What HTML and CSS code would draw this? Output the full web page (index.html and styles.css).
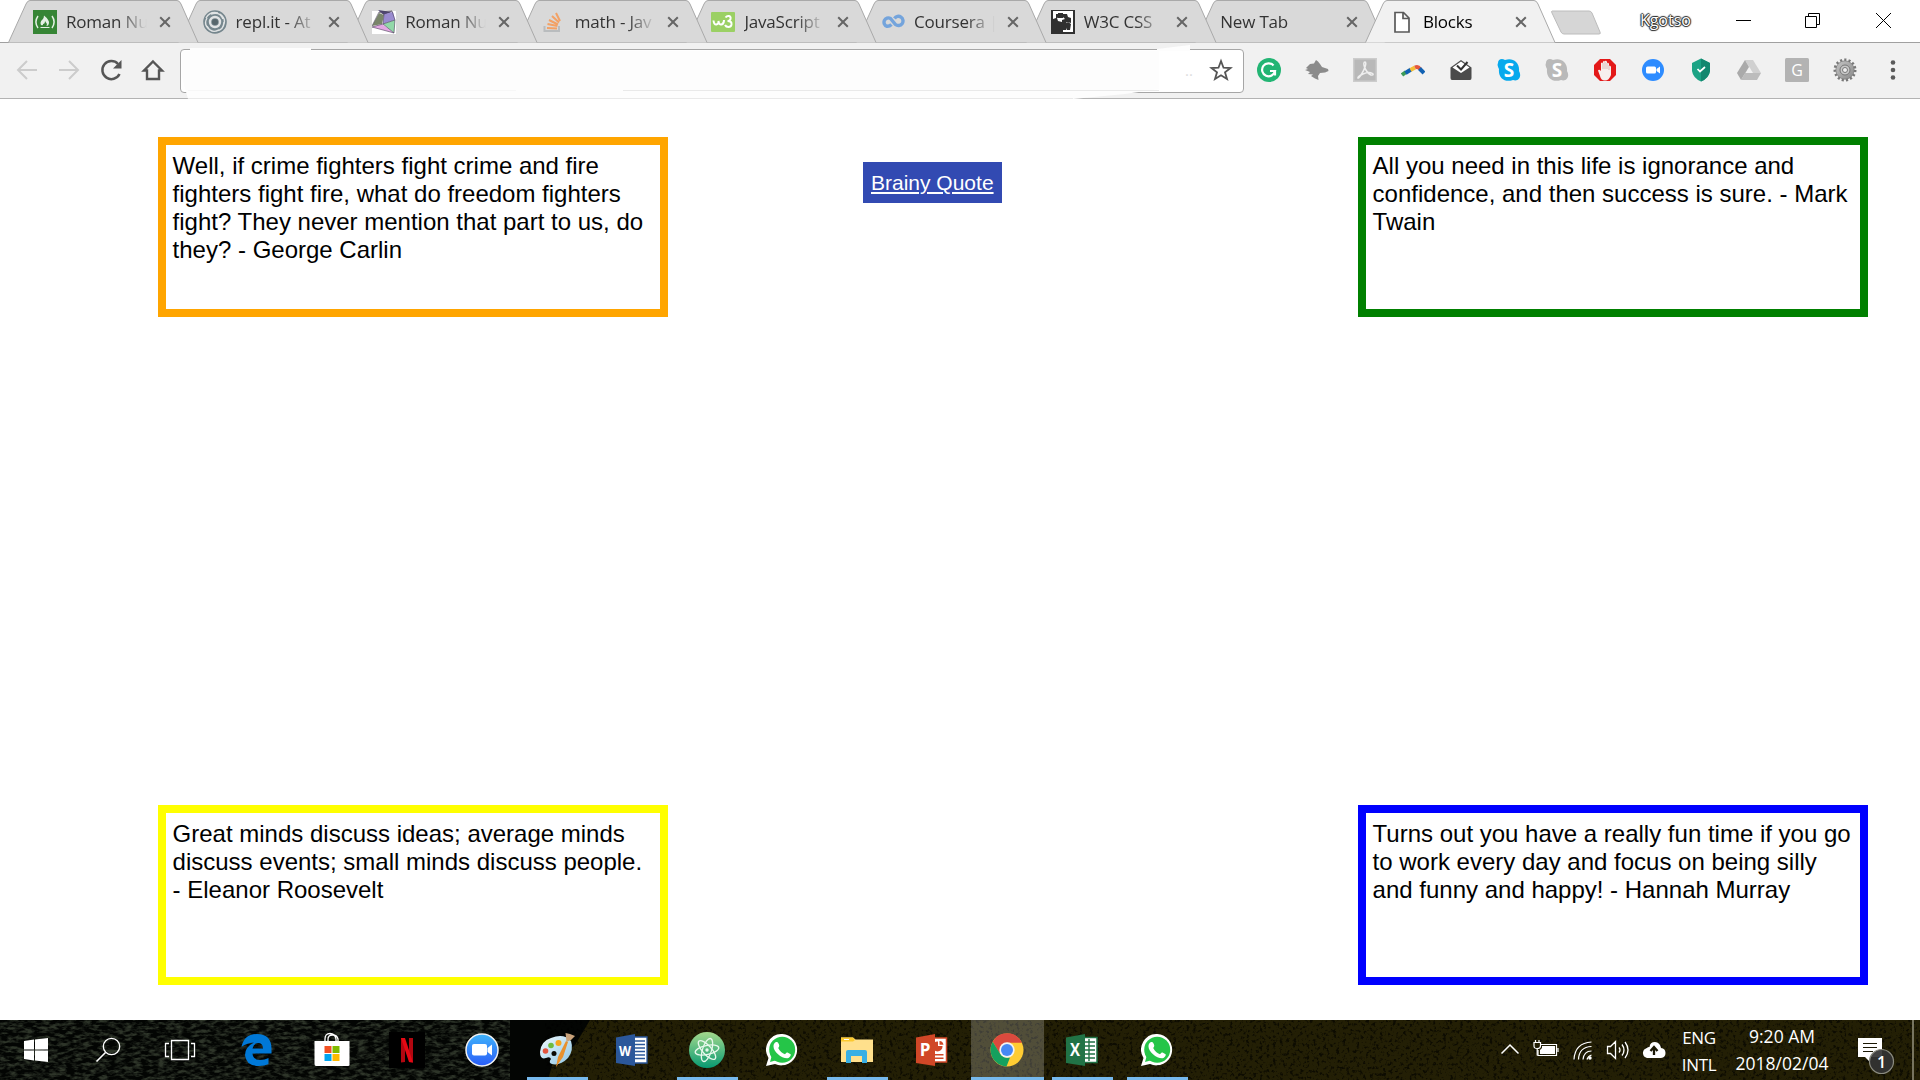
FILE: index.html
```
<!DOCTYPE html>
<html lang="en">
<head>
<meta charset="utf-8">
<title>Blocks</title>
<link rel="stylesheet" href="styles.css">
</head>
<body>
<svg class="defs" aria-hidden="true">
  <defs>
    <linearGradient id="atomg" x1="0" y1="0" x2="0" y2="1"><stop offset="0" stop-color="#a3d88c"/><stop offset="1" stop-color="#089a72"/></linearGradient>
    <linearGradient id="zoomg" x1="0" y1="0" x2="0" y2="1"><stop offset="0" stop-color="#3fb4fb"/><stop offset="1" stop-color="#2a5cf8"/></linearGradient>
    <linearGradient id="gearg" x1="0" y1="0" x2="1" y2="1"><stop offset="0" stop-color="#c5c5c5"/><stop offset="1" stop-color="#8a8a8a"/></linearGradient>
    <linearGradient id="palg" x1="0" y1="0" x2="1" y2="1"><stop offset="0" stop-color="#f0faff"/><stop offset="1" stop-color="#8fc6e4"/></linearGradient>
    <filter id="grain" x="0" y="0" width="100%" height="100%"><feTurbulence type="fractalNoise" baseFrequency=".3" numOctaves="3" seed="4"/><feColorMatrix values="0 0 0 0 0  0 0 0 0 0  0 0 0 0 0  5 0 0 0 -2.6"/></filter>
    <filter id="streaks" x="0" y="0" width="100%" height="100%"><feTurbulence type="fractalNoise" baseFrequency=".12 .3" numOctaves="3" seed="9"/><feColorMatrix values="0 0 0 0 .1  0 0 0 0 .13  0 0 0 0 .08  3 0 0 0 -1.2"/></filter>
    <symbol id="tabshape" viewBox="0 0 191 43"><path d="M.5 42.5 18 4Q19.500.5 22 .5H169Q171.500.5 173 4L190 42.500"/></symbol>
    <symbol id="x" viewBox="0 0 12 12"><path d="M1.200 1.200 10.800 10.800M10.800 1.200 1.200 10.800" fill="none" stroke="#666" stroke-width="2"/></symbol>
    <symbol id="whatsapp" viewBox="0 0 32 32"><path d="M16.300 0A15.700 15.700 0 1 1 9 30L0 32 2.500 24A15.700 15.700 0 0 1 16.300 0Z" fill="#fff"/><circle cx="16.200" cy="15.800" r="13" fill="#25c548"/><path d="M4 28 6 21 11 26Z" fill="#25c548"/><path d="M9.500 8.200C11.500 7.500 12 8 12.800 10S13.400 12.300 12.200 14C14 17.500 16 19.300 19 20.200 20.500 18.400 21 18.200 22 18.800L24.600 20.200C25.400 21 23.500 24 21.500 24.200 15.500 24.500 7.500 17.500 7.500 12.400 7.500 10.400 8.200 9 9.500 8.200Z" fill="#fff"/></symbol>
    <symbol id="skype" viewBox="0 0 24 24"><path d="M1 5C1 1 5 0 8 2 15-1 23 4 22 13 25 18 22 24 16 22 8 25 1 20 2 11 1 9 0 7 1 5Z"/><text x="12" y="18.500" text-anchor="middle" font-size="19" font-weight="700" fill="#fff">S</text></symbol>
  </defs>
</svg>

<header class="browser">
  <div class="tabstrip">
    <div class="tab t1"><svg class="shape"><use href="#tabshape"/></svg>
      <svg class="fav" viewBox="0 0 24 24"><path fill="#368535" d="M0 0H24V24H0Z"/><path d="M5 6Q.8 12 5 18M19 6Q23.200 12 19 18" fill="none" stroke="#e4f0e4" stroke-width="1.500"/><path d="M11 5.500Q16.500 10 16 13 15.500 16 13.500 16 14.500 13.500 12 11 12 14 10 14 10.500 16 8 15 6.500 12 9.500 9.500 11 8 11 5.500ZM7.500 17H16.500V18H7.500Z" fill="#e4f0e4"/></svg>
      <span class="title">Roman Nu</span><svg class="close"><use href="#x"/></svg></div>
    <div class="tab t2"><svg class="shape"><use href="#tabshape"/></svg>
      <svg class="fav" viewBox="0 0 24 24"><circle cx="12" cy="12" r="11.800" fill="#75868d"/><circle cx="12" cy="12" r="5" fill="none" stroke="#e1e3e4" stroke-width="2.400"/><circle cx="12" cy="12" r="3" fill="#57666c"/><path d="M3 8Q7 1 15 3M8 4Q17 1 20 9M17 4Q24 9 20 16M21 12Q21 20 13 21M16 20Q8 24 4 16M7 20Q0 15 4 8" fill="none" stroke="#e0e3e4" stroke-width="1.400"/></svg>
      <span class="title">repl.it - At</span><svg class="close"><use href="#x"/></svg></div>
    <div class="tab t3"><svg class="shape"><use href="#tabshape"/></svg>
      <svg class="fav" viewBox="0 0 24 24"><path fill="#fff" d="M0 1H24V24H0Z"/><path fill="#4e4775" d="M6 0 20 2 12 5Z"/><path fill="#9a8bd0" d="M12 4 21 2 23 10 11 14Z"/><path fill="#91d8a8" d="M11 14 23 10 22 23Z"/><path fill="#e3a8e3" d="M0 17 10 14 22 23Z"/><path fill="#79856a" d="M0 16 7 3 12 5 10 14Z"/><path d="M0 16 7 2 20 1 23 10 22 23 0 17 11 14 23 10M11 14 22 23M11 14 12 4 7 2M12 4 20 1" fill="none" stroke="#4b405a" stroke-width=".6"/></svg>
      <span class="title">Roman Nu</span><svg class="close"><use href="#x"/></svg></div>
    <div class="tab t4"><svg class="shape"><use href="#tabshape"/></svg>
      <svg class="fav" viewBox="0 0 24 24"><path d="M2.500 16V21H17V16" fill="none" stroke="#b9bcbe" stroke-width="2"/><path d="M5 18 15 18.500M5.500 14 15.500 16M7 10 16 14.500M10 6 17 12.500M14 3 18 11" stroke="#f3a165" stroke-width="2"/></svg>
      <span class="title">math - Jav</span><svg class="close"><use href="#x"/></svg></div>
    <div class="tab t5"><svg class="shape"><use href="#tabshape"/></svg>
      <svg class="fav" viewBox="0 0 24 24"><rect y="2" width="24" height="20" rx="1" fill="#9bd064"/><path d="M2.500 10.500Q3 15 5.500 14.500 8 14 7.500 11 8 15 10.500 14.500 13 14 13 10" fill="none" stroke="#fff" stroke-width="2"/><path d="M14.500 7.500Q16 5.500 18 6T19.500 9Q19 11 16.500 11 21 11 20.500 14.500 20 17 17.500 17T14 15" fill="none" stroke="#fff" stroke-width="2"/></svg>
      <span class="title">JavaScript</span><svg class="close"><use href="#x"/></svg></div>
    <div class="tab t6"><svg class="shape"><use href="#tabshape"/></svg>
      <svg class="fav" viewBox="0 0 24 24"><path d="M10.500 14.500Q8.500 16.500 6 16.300A4.300 4.300 0 1 1 9.500 8.500L14.500 14.500A4.600 4.600 0 1 0 13.500 8.500" fill="none" stroke="#74a4dc" stroke-width="3.400"/></svg>
      <span class="title">Coursera |</span><svg class="close"><use href="#x"/></svg></div>
    <div class="tab t7"><svg class="shape"><use href="#tabshape"/></svg>
      <svg class="fav" viewBox="0 0 24 24"><path fill="#303030" d="M0 0H24V24H0Z"/><path fill="#fff" d="M2 1H22V22H12V20H15L16 17 19 18V15L15 13 16 12 20 13V8L17 7 16 4H12V7L14 9 11 10V12L7 11 6 8 9 7 7 4H5V8L2 9Z"/><path fill="#303030" d="M7 3H12V8H7ZM14 14 17 12 20 14 19 20H16Z"/></svg>
      <span class="title">W3C CSS</span><svg class="close"><use href="#x"/></svg></div>
    <div class="tab t8"><svg class="shape"><use href="#tabshape"/></svg>
      <span class="title wide">New Tab</span><svg class="close"><use href="#x"/></svg></div>
    <div class="tab active"><svg class="shape"><use href="#tabshape"/></svg>
      <svg class="fav" viewBox="0 0 24 24"><path d="M5 2.500H13.500L19 8V22H5ZM13 2.500V8.500H19" fill="#fff" stroke="#5a5a5a" stroke-width="1.700"/></svg>
      <span class="title">Blocks</span><svg class="close"><use href="#x"/></svg></div>
    <svg class="newtab" viewBox="0 0 54 28"><path d="M2 2H39Q41 2 42 4L50 23Q51 25 49 25H14Q12 25 11 23L2 4Q1 2 2 2Z" fill="#d6d6d6" stroke="#bcbcbc"/></svg>
    <span class="profile">Kgotso</span>
    <div class="controls">
      <svg viewBox="0 0 70 42"><path d="M28 20.500H43"/></svg>
      <svg viewBox="0 0 70 42"><path d="M27.500 16.500H38.500V27.500H27.500ZM30.500 16V13.500H41.500V24.500H39"/></svg>
      <svg viewBox="0 0 70 42"><path d="M28 13 43 28M43 13 28 28"/></svg>
    </div>
  </div>

  <div class="toolbar">
    <nav class="nav">
      <svg viewBox="0 0 24 24"><path d="M22 12H3M12 3 3 12 12 21" stroke="#ccc"/></svg>
      <svg viewBox="0 0 24 24"><path d="M2 12H21M12 3 21 12 12 21" stroke="#ccc"/></svg>
      <svg viewBox="0 0 24 24"><path d="M20.500 16A9 9 0 1 1 19 6" stroke="#555" stroke-width="2.500"/><path d="M22.500 2V10.500H14Z" fill="#555"/></svg>
      <svg viewBox="0 0 24 24"><path d="M12 3.500 21 12.500H18V21H6V12.500H3Z" stroke="#555" stroke-width="2.400"/></svg>
    </nav>
    <div class="omnibox"><span class="dots">..</span>
      <svg class="star" viewBox="0 0 24 24"><path d="M12 3 14.500 9.700 21.500 10 16 14.300 18 21 12 17.200 6 21 8 14.300 2.500 10 9.500 9.700Z" fill="none" stroke="#555" stroke-width="1.800"/></svg>
    </div>
    <div class="extensions">
      <svg viewBox="0 0 24 24"><circle cx="12" cy="12" r="12" fill="#23b574"/><path d="M16.500 7.500A6.500 6.500 0 1 0 18 13H13M18 13V17.500" fill="none" stroke="#fff" stroke-width="2.200"/></svg>
      <svg viewBox="0 0 24 24"><path d="M1 10 5 6 9 5.500 11 2 13 3.500 15 6 17 9 23 11 23.500 13 20 14.500 15 15 13 18 13.500 22 10 20.500 6 18 8 16.500 3 16 5 14 0 12 3 11Z" fill="#8b8b8b"/></svg>
      <svg viewBox="0 0 24 24"><path d="M.7.7H23.300V23.300H.7Z" fill="#b8b8b8" stroke="#ccc" stroke-width="1.500"/><path d="M12 4C9 4 12 14 18 17 23 18 19 12 10 16 3 19 4 23 8 17 12 11 14 4 12 4Z" fill="none" stroke="#eee" stroke-width="1.500"/></svg>
      <svg viewBox="0 0 24 24"><g fill="none" stroke-width="4"><path d="M1 17 5 14" stroke="#3c9b57"/><path d="M4.500 15 10 11.500" stroke="#1262b3"/><path d="M9.500 12 14 9.500" stroke="#f5bd35"/><path d="M14 9.500Q17 8 19 11" stroke="#e3573f"/><path d="M18.500 10.500 23 15" stroke="#1262b3"/></g></svg>
      <svg viewBox="0 0 24 24"><path d="M1.500 9.500 12 2 22.500 9.500V20Q22.500 22 21 22H3Q1.500 22 1.500 20Z" fill="#4b4b4b"/><path d="M3.500 9.500 12 3.500 20.500 9.500 12 15Z" fill="#fff"/><path d="M8 7.500 12 11.500 18.500 4" fill="none" stroke="#333" stroke-width="2"/></svg>
      <svg viewBox="0 0 24 24" fill="#07a9ed"><use href="#skype"/></svg>
      <svg viewBox="0 0 24 24" fill="#b9b9b9"><use href="#skype"/></svg>
      <svg viewBox="0 0 24 24"><path d="M7 1H17L23 7V17L17 23H7L1 17V7Z" fill="#e31919"/><path d="M7 18 5 12.500Q6 11 8 13V5Q9 4 10 5V3.500Q11 2.500 12 3.500V3Q13.500 2 14 4V5Q15.500 4 16 6V8Q17.500 7 18 9V17Q16 22.500 12 22.500T7 18Z" fill="#f7efed"/><path d="M10 5V11M12 4V11M14 5V11M16 7V12" stroke="#c99" stroke-width=".6"/></svg>
      <svg viewBox="0 0 24 24"><circle cx="12" cy="12" r="11" fill="#2e8cff"/><rect x="5" y="8.500" width="10" height="7" rx="1.500" fill="#fff"/><path d="M15.500 11 19 8.500V15.500L15.500 13Z" fill="#fff"/></svg>
      <svg viewBox="0 0 24 24"><path d="M12 .5 21 5V13Q20 20 12 23.500 4 20 3 13V5Z" fill="#1ca385"/><path d="M12 .5 21 5V13Q20 20 12 23.500Z" fill="#12876f"/><path d="M8.500 11 11 13.500 16 9" fill="none" stroke="#fff" stroke-width="1.700"/></svg>
      <svg viewBox="0 0 24 24"><path d="M8 2H16L24 15H16Z" fill="#d0d0d0"/><path d="M8 2 12 9 4 22 0 15Z" fill="#aaa"/><path d="M8 15H24L20 22H4Z" fill="#bcbcbc"/></svg>
      <svg viewBox="0 0 24 24"><rect width="24" height="24" rx="1.500" fill="#b3b3b3"/><text x="12" y="17.500" text-anchor="middle" font-size="16" fill="#fff">G</text></svg>
      <svg viewBox="0 0 24 24"><circle cx="12" cy="12" r="10" fill="none" stroke="#777" stroke-width="3" stroke-dasharray="2.100 2.090"/><circle cx="12" cy="12" r="9.200" fill="url(#gearg)" stroke="#777" stroke-width=".7"/><circle cx="12" cy="12" r="5" fill="#c8c8c8" stroke="#777"/><circle cx="12" cy="12" r="2.500" fill="#eee" stroke="#777"/></svg>
      <svg viewBox="0 0 24 24"><circle cx="12" cy="4.500" r="2.300" fill="#5a5a5a"/><circle cx="12" cy="12" r="2.300" fill="#5a5a5a"/><circle cx="12" cy="19.500" r="2.300" fill="#5a5a5a"/></svg>
    </div>
    <svg class="wash" viewBox="0 43 1920 56"><path d="M182 77 188 99H1073L1125 94 1159 89V51H182Z" fill="#fdfdfd"/><path d="M190 48H311V60H190ZM1157 49 1190 45V51H1157Z" fill="#fdfdfd"/><path d="M188 98.500H1073M623 90.500H1159" stroke="#e9e9e9"/><path d="M188 90.500H516" stroke="#f7f7f7"/></svg>
  </div>
</header>

<main class="page">
  <p class="block orange">Well, if crime fighters fight crime and fire fighters fight fire, what do freedom fighters fight? They never mention that part to us, do they? - George Carlin</p>
  <a class="link">Brainy Quote</a>
  <p class="block green">All you need in this life is ignorance and confidence, and then success is sure. - Mark Twain</p>
  <p class="block yellow">Great minds discuss ideas; average minds discuss events; small minds discuss people. - Eleanor Roosevelt</p>
  <p class="block blue">Turns out you have a really fun time if you go to work every day and focus on being silly and funny and happy! - Hannah Murray</p>
</main>

<footer class="taskbar">
  <svg class="texture" viewBox="0 0 1920 60"><path fill="#030503" d="M0 0H1920V60H0Z"/><rect width="510" height="60" filter="url(#streaks)" opacity=".5"/><path fill="#231f05" d="M590 0H1920V60H548L553 42 575 25Z"/><rect x="545" width="1375" height="60" filter="url(#grain)" opacity=".6"/></svg>
  <div class="system">
    <svg viewBox="0 0 36 36"><path fill="#fff" d="M6 9 16 7.600V17.500H6ZM17 7.500 30 6V17.500H17ZM6 18.500H16V28.500L6 27ZM17 18.500H30V30L17 28.500Z"/></svg>
    <svg viewBox="0 0 36 36"><circle cx="21.500" cy="14.500" r="8.200"/><path d="M15.500 20.500 6.500 29.500" stroke-width="1.600"/></svg>
    <svg viewBox="0 0 36 36"><path d="M9.500 8.500H26.500V27.500H9.500ZM7 11.500H3.500V24.500H7M29 11.500H32.500V24.500H29"/></svg>
  </div>
  <div class="apps">
    <div class="app"><svg viewBox="0 0 36 36"><path d="M2.500 15Q5 2 18 2 32 2 32.500 16V21.500H13.500Q14 28 21 28 26 28 29.500 26V32Q26 34 20 34 7 34 6 23 6 15 15 10.500 7 11 2.500 15ZM13.500 16.500H24Q24 11 19 11 15 11 13.500 16.500Z" fill="#0078d7"/></svg></div>
    <div class="app"><svg viewBox="0 0 36 36"><path d="M11 10V7Q11 1.500 16 1.500T22 7V10M14 10V7Q14 3 18.500 3T24 7V10" fill="none" stroke="#fff" stroke-width="1.300"/><path d="M.5 9H35.500V33Q35.500 34 34 34H2Q.5 34 .5 32Z" fill="#fff"/><path fill="#f25022" d="M10.500 14H17.500V21H10.500Z"/><path fill="#7fba00" d="M18.500 14H25.500V21H18.500Z"/><path fill="#00a4ef" d="M10.500 22H17.500V29H10.500Z"/><path fill="#ffb900" d="M18.500 22H25.500V29H18.500Z"/></svg></div>
    <div class="app"><svg viewBox="0 0 36 36"><path d="M0 0H36V36H0Z" fill="#000"/><path d="M12 6H16V30L12 30.500ZM20 6H24V30.500L20 30Z" fill="#b20710"/><path d="M12 6H16L24 30.500 20 30Z" fill="#e50914"/></svg></div>
    <div class="app"><svg viewBox="0 0 36 36"><circle cx="18" cy="18" r="16" fill="url(#zoomg)" stroke="#f3f3f3" stroke-width="1.500"/><rect x="8" y="12" width="15" height="11.500" rx="2" fill="#fff"/><path d="M23.500 16 28 12.500V23.500L23.500 20Z" fill="#fff"/></svg></div>
    <div class="app open"><svg viewBox="0 0 36 36"><path d="M1 20Q2 9 12 6 25 1 32 9 35 18 29 26 21 34 13 32 9 31 12 27 11 24 7 26 1 28 1 20Z" fill="url(#palg)"/><circle cx="15" cy="21.500" r="2.500" fill="#0b0a04"/><circle cx="6.500" cy="19" r="2.800" fill="#e2553e"/><circle cx="12" cy="13.500" r="2.800" fill="#6fbb3e"/><circle cx="19.500" cy="11" r="3" fill="#f6a51e"/><path d="M17 35 19 25 27 9 29 10 24 25Z" fill="#e8912d"/><path d="M26.500 1 31 2 36 4 32 8 27.500 10Z" fill="#c9a27a"/></svg></div>
    <div class="app"><svg viewBox="0 0 36 36"><path d="M19 5H33V31H19Z" fill="#fff" stroke="#2b579a" stroke-width="1.300"/><path d="M20 9H31M20 12.500H31M20 16H31M20 19.500H31M20 23H31M20 26.500H31" stroke="#2b579a" stroke-width="1.500"/><path d="M2 5.500 21 2V34L2 31Z" fill="#2b579a"/><text x="11" y="23.500" text-anchor="middle" font-size="15" font-weight="700" fill="#fff" textLength="12" lengthAdjust="spacingAndGlyphs">W</text></svg></div>
    <div class="app open"><svg viewBox="0 0 36 36"><circle cx="18" cy="18" r="18" fill="url(#atomg)"/><g fill="none" stroke="#e8f8ec" stroke-width="1.300"><ellipse cx="18" cy="18" rx="12" ry="4.500" transform="rotate(-12 18 18)"/><ellipse cx="18" cy="18" rx="12" ry="4.500" transform="rotate(48 18 18)"/><ellipse cx="18" cy="18" rx="12" ry="4.500" transform="rotate(108 18 18)"/></g><circle cx="18" cy="18" r="1.700" fill="#e8f8ec"/></svg></div>
    <div class="app"><svg viewBox="-2 -2 36 36"><use href="#whatsapp" width="32" height="32"/></svg></div>
    <div class="app open"><svg viewBox="0 0 36 36"><path d="M2 5.500H14L16.500 7.500H34V30H2Z" fill="#ffe08c"/><path d="M2 5.500H14L16 8 14 9.500H2Z" fill="#fbc92f"/><path d="M5 7.500H10" stroke="#fff"/><path d="M7 31V20Q7 18 9 18H26Q28 18 28 20V31H23V24H12V31Z" fill="#38afe4"/></svg></div>
    <div class="app"><svg viewBox="0 0 36 36"><path d="M19 6H32.500V30H19Z" fill="#fff" stroke="#d04727" stroke-width="1.500"/><circle cx="23.500" cy="14.500" r="5" fill="#d04727"/><path d="M24 14V8.500A5.500 5.500 0 0 1 29.500 14Z" fill="#fff"/><path d="M25.500 12.700V9A4.500 4.500 0 0 1 29.500 12.700ZM20 22H29.500V23.500H20ZM20 25.500H29.500V27H20Z" fill="#d04727"/><path d="M2 5.500 21 2V34L2 31Z" fill="#d04727"/><text x="11" y="24" text-anchor="middle" font-size="17" font-weight="700" fill="#fff">P</text></svg></div>
    <div class="app open current"><svg viewBox="0 0 36 36"><circle cx="18" cy="18" r="16.500" fill="#fc3"/><path d="M3.700 9.800A16.500 16.500 0 0 1 33 10.700H18L10.500 21Z" fill="#db4a3e"/><path d="M3.700 9.800 11.300 22Q14 26.300 21 25.500L17.500 34.500A16.500 16.500 0 0 1 3.700 9.800Z" fill="#15a05e"/><circle cx="18" cy="18" r="7.700" fill="#f3f3f3"/><circle cx="18" cy="18" r="6" fill="#4688f4"/></svg></div>
    <div class="app open"><svg viewBox="0 0 36 36"><path d="M19 5.500H33V30.500H19Z" fill="#fff" stroke="#217346" stroke-width="1.500"/><path d="M20 10H31M20 14H31M20 18H31M20 22H31M20 26H31M25 7V29" stroke="#217346" stroke-width="1.400"/><path d="M2 5.500 21 2V34L2 31Z" fill="#217346"/><text x="11" y="24" text-anchor="middle" font-size="17" font-weight="700" fill="#fff" textLength="10" lengthAdjust="spacingAndGlyphs">X</text></svg></div>
    <div class="app open"><svg viewBox="-2 -2 36 36"><use href="#whatsapp" width="32" height="32"/></svg></div>
  </div>
  <div class="tray">
    <svg class="chev" viewBox="0 0 20 24"><path d="M1.500 15.500 10 7 18.500 15.500" stroke-width="1.500"/></svg>
    <svg class="batt" viewBox="0 0 26 24"><path d="M7 6.500H23.500V17.500H5V12M25 10V14"/><path d="M9 8H22V16H7V12L9 10Z" fill="#fff" stroke="none"/><path d="M1 4.500H7.500V8Q7.500 10.500 4.200 10.500T1 8ZM2.500 2V4M6 2V4M4.200 10.500V17.500"/></svg>
    <svg class="wifi" viewBox="0 0 20 24"><path d="M1 21.500Q2 5 18.500 4M5.500 21.500Q6 9 18.500 8.500M10 21.500Q11 13 18.500 13M14 21.500Q15 18 18.500 17"/><circle cx="17" cy="20" r="1.700" fill="#fff" stroke="none"/></svg>
    <svg class="vol" viewBox="0 0 24 24"><path d="M1.500 8.500H4.500L9.500 3.500V20.500L4.500 15.500H1.500ZM13 9.500Q15 12 13 14.500M16 6.500Q20 12 16 17.500M19 4Q25 12 19 20" stroke-width="1.300"/></svg>
    <svg class="cloud" viewBox="0 0 24 24"><path d="M5 20A5 5 0 0 1 4 10.500Q6 8.500 7.500 9 8 4 13 4 18 4.500 19 10 23.500 10.500 23.500 15T19 20Z" fill="#fff" stroke="none"/><path d="M12 17V10M8.500 13 12 9 15.500 13" stroke="#1b1804" stroke-width="2.300"/></svg>
    <div class="lang"><span>ENG</span><span>INTL</span></div>
    <div class="clock"><span>9:20 AM</span><span>2018/02/04</span></div>
    <svg class="note" viewBox="0 0 38 38"><path d="M1 1H25V20H14L13 25 8 20H1Z" fill="#fff" stroke="none"/><path d="M6 6.500H20M6 10.500H20M6 14.500H16" stroke="#1b1804"/><circle cx="24.500" cy="24.500" r="12" fill="#333" fill-opacity=".92" stroke="#8b8b80"/><text x="24.500" y="30.500" text-anchor="middle" font-size="16" font-weight="600" fill="#fff" stroke="none">1</text></svg>
    <span class="peek"></span>
  </div>
</footer>
</body>
</html>
```
FILE: styles.css
```
* { box-sizing: border-box; }
body { margin: 0; width: 1920px; height: 1080px; overflow: hidden; display: flex; flex-direction: column; background: #fff; font-family: "Open Sans", "Noto Sans", sans-serif; }
svg { display: block; flex: none; }
.defs { position: absolute; width: 0; height: 0; }

.tabstrip { display: flex; align-items: center; height: 43px; padding-left: 8px; border-bottom: 1px solid #a0a0a0; }
.tab { position: relative; display: flex; align-items: center; flex: none; width: 190px; height: 43px; padding-left: 25px; margin-right: -20.4px; top: .5px; }
.t1 { z-index: 8; } .t2 { z-index: 7; } .t3 { z-index: 6; } .t4 { z-index: 5; }
.t5 { z-index: 4; } .t6 { z-index: 3; } .t7 { z-index: 2; } .t8 { z-index: 1; }
.active { z-index: 9; margin-right: -5px; }
.shape { position: absolute; left: 0; top: 0; width: 191px; height: 43px; fill: #d9d9d9; stroke: #a9a9a9; }
.active .shape { fill: #f1f1f1; }
.fav { position: relative; width: 24px; height: 24px; margin-right: 9px; }
.title { position: relative; width: 81px; margin-right: 11.500px; font-size: 17px; line-height: 24px; letter-spacing: -.2px; color: #333; white-space: nowrap; -webkit-mask-image: linear-gradient(90deg, #000 64%, transparent); mask-image: linear-gradient(90deg, #000 64%, transparent); }
.title.wide { width: 114px; }
.active .title { color: #000; }
.close { position: relative; width: 12px; height: 12px; }
.newtab { width: 54px; height: 28px; margin-top: 4px; }
.profile { width: 56px; margin-left: 36px; margin-top: -3px; font-size: 16px; line-height: 22px; color: #fff; text-shadow: 1px 0 1px #222, -1px 0 1px #222, 0 1px 1px #222, 0 -1px 1px #222; }
.controls { display: flex; margin-left: 12px; }
.controls svg { width: 70px; height: 42px; fill: none; stroke: #000; }

.toolbar { position: relative; display: flex; align-items: center; height: 56px; padding-bottom: 1px; background: #f1f1f1; border-bottom: 1px solid #b3b3b3; }
.nav { display: flex; gap: 18px; padding-left: 15px; width: 180px; }
.nav svg { width: 24px; height: 24px; fill: none; stroke-width: 2; }
.omnibox { position: relative; z-index: 2; display: flex; align-items: center; justify-content: flex-end; width: 62px; height: 42px; margin-left: 1000px; padding-right: 9px; }
.toolbar::before { content: ""; position: absolute; left: 180px; top: 6px; width: 1062px; height: 42px; background: #fff; border: 1px solid #a6a6a6; border-radius: 4px; }
.dots { margin-right: 16px; color: #ddd; font-size: 15px; }
.star { width: 24px; height: 24px; }
.extensions { display: flex; width: 675px; padding-left: 15px; gap: 24px; }
.extensions svg { width: 24px; height: 24px; }
.wash { position: absolute; z-index: 1; left: 0; top: 0; width: 1920px; height: 56px; }

.page { flex: 1; display: grid; grid-template-columns: 510px 690px 510px; align-content: space-between; padding: 38px 52px 35px 158px; font-family: "Liberation Sans", Arial, sans-serif; }
.block { margin: 0; width: 510px; height: 180px; padding: 7px 4px 0 6.600px; border: 8px solid; font-size: 24px; line-height: 28px; }
.block { color: #000; }
.orange { border-color: orange; }
.green { border-color: green; }
.yellow { border-color: yellow; }
.blue { border-color: blue; grid-column: 3; }
.link { justify-self: start; align-self: start; height: 41px; margin: 25px 0 0 195px; padding: 0 8px; background: #324ab2; color: #fff; font-size: 21px; line-height: 41px; text-decoration: underline; }

.block::first-line { color: #000; }
.taskbar { position: relative; display: flex; height: 60px; }
.texture { position: absolute; left: 0; top: 0; width: 1920px; height: 60px; }
.system, .apps, .tray { position: relative; display: flex; align-items: center; }
.system svg { width: 36px; height: 36px; margin: 0 18px; fill: none; stroke: #fff; stroke-width: 1.3; }
.system svg:first-child { stroke: none; }
.apps { margin-left: 4px; }
.app { display: flex; align-items: center; width: 61px; height: 60px; margin: 0 7px; padding-left: 12px; border: 0 solid #76b9ed; }
.app svg { width: 36px; height: 36px; }
.open { border-bottom-width: 3px; padding-top: 3px; }
.current { width: 73px; margin: 0 1px; padding-left: 18px; background: rgba(255,255,255,.21); }
.tray { margin-left: 305px; color: #fff; }
.tray svg { height: 24px; fill: none; stroke: #fff; stroke-width: 1.2; }
.chev { width: 20px; }
.batt { width: 26px; margin-left: 13px; }
.wifi { width: 20px; margin-left: 14px; }
.vol { width: 24px; margin-left: 13px; }
.cloud { width: 24px; margin-left: 12px; }
.lang, .clock { display: flex; flex-direction: column; align-items: center; font-size: 17px; line-height: 27px; margin-top: 1px; }
.lang { width: 34px; margin-left: 16px; letter-spacing: -.3px; }
.clock { width: 96px; margin: 0 1px 0 18px; font-size: 17.500px; }
.tray .note { width: 38px; height: 38px; margin: 12px 0 0 26px; }
.peek { width: 2px; height: 60px; margin-left: 17px; background: #77745f; }
```
